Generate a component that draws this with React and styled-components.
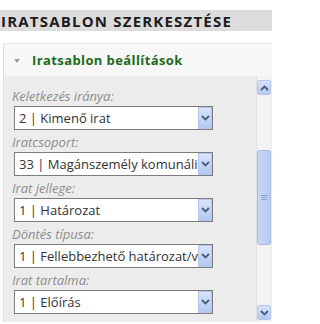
import React from "react";
import styled, { createGlobalStyle } from "styled-components";

const GlobalStyle = createGlobalStyle`
  html, body {
    margin: 0;
    padding: 0;
    background: #fff;
    overflow: hidden;
  }
  body {
    width: 272px;
    height: 324px;
    font-family: "Open Sans", "Liberation Sans", sans-serif;
  }
`;

const Page = styled.div`
  padding-top: 10px;
`;

const TitleBar = styled.h1`
  margin: 0;
  height: 21px;
  line-height: 22px;
  padding-left: 1px;
  background: #dcdcdc;
  color: #1c1c1c;
  font-size: 15px;
  font-weight: 700;
  letter-spacing: 1.2px;
  white-space: nowrap;
  overflow: hidden;
`;

const Panel = styled.section`
  margin: 12px 0 0 3px;
  border-left: 1px solid #dedede;
  border-top: 1px solid #e6e6e6;
`;

const PanelHeader = styled.div`
  height: 32px;
  display: flex;
  align-items: center;
  gap: 12px;
  padding-left: 10px;
  background: #f7f7f7;
  color: #1d6a1d;
  font-size: 13px;
  font-weight: 700;
  letter-spacing: 0.4px;
`;

const Caret = styled.span`
  width: 0;
  height: 0;
  margin-top: 2px;
  border-left: 3.5px solid transparent;
  border-right: 3.5px solid transparent;
  border-top: 4px solid #9a9a9a;
`;

const PanelBody = styled.div`
  height: 246px;
  display: flex;
  background: #ececec;
  overflow: hidden;
`;

const Form = styled.div`
  flex: 1;
  padding: 10px 0 0 8px;
`;

const Field = styled.div`
  margin-bottom: 2px;
`;

const Label = styled.div`
  height: 20px;
  line-height: 20px;
  color: #8c8c8c;
  font-size: 13px;
  font-style: italic;
`;

const SelectBox = styled.div`
  width: 199px;
  height: 24px;
  margin-left: 2px;
  box-sizing: border-box;
  display: flex;
  border: 1px solid #7c7c7c;
  background: #fff;
`;

const SelectText = styled.span`
  flex: 1;
  min-width: 0;
  overflow: hidden;
  white-space: nowrap;
  text-overflow: clip;
  padding-left: 4px;
  color: #333;
  font-size: 13px;
  line-height: 22px;
`;

const BlueButton = styled.span`
  width: ${(p) => p.$w || 14}px;
  height: ${(p) => p.$h || 22}px;
  box-sizing: border-box;
  flex-shrink: 0;
  display: flex;
  align-items: center;
  justify-content: center;
  background: linear-gradient(#d9e4fb, #b3c7f1);
  border: 1px solid #b4c6ec;
  border-radius: ${(p) => (p.$round ? 2 : 0)}px;
`;

const Scrollbar = styled.div`
  width: 14px;
  margin-right: 1px;
  padding: 4px 0 2px;
  display: flex;
  flex-direction: column;
  background: #f3f3f3;
  border-left: 1px solid #e2e2e2;
`;

const Thumb = styled.div`
  height: 95px;
  margin-top: 55px;
  box-sizing: border-box;
  display: flex;
  align-items: center;
  justify-content: center;
  background: linear-gradient(90deg, #c9d7f6, #b8caf2);
  border: 1px solid #a9bde8;
  border-radius: 2px;
`;

const Grip = styled.div`
  width: 6px;
  height: 5px;
  background: repeating-linear-gradient(#8fa5d4 0 1px, transparent 1px 2px);
`;

const Spacer = styled.div`
  flex: 1;
`;

const Chevron = ({ up }) => (
  <svg width="9" height="6" viewBox="0 0 9 6">
    <path
      d={up ? "M1 5 L4.5 1.5 L8 5" : "M1 1 L4.5 4.5 L8 1"}
      fill="none"
      stroke="#4a5d85"
      strokeWidth="1.8"
    />
  </svg>
);

const fields = [
  { label: "Keletkezés iránya:", value: "2 | Kimenő irat" },
  { label: "Iratcsoport:", value: "33 | Magánszemély komunális adó" },
  { label: "Irat jellege:", value: "1 | Határozat" },
  { label: "Döntés típusa:", value: "1 | Fellebbezhető határozat/végzés" },
  { label: "Irat tartalma:", value: "1 | Előírás" },
];

const App = () => (
  <Page>
    <GlobalStyle />
    <TitleBar>IRATSABLON SZERKESZTÉSE</TitleBar>
    <Panel>
      <PanelHeader>
        <Caret />
        Iratsablon beállítások
      </PanelHeader>
      <PanelBody>
        <Form>
          {fields.map((f) => (
            <Field key={f.label}>
              <Label>{f.label}</Label>
              <SelectBox>
                <SelectText>{f.value}</SelectText>
                <BlueButton>
                  <Chevron />
                </BlueButton>
              </SelectBox>
            </Field>
          ))}
        </Form>
        <Scrollbar>
          <BlueButton $w={14} $h={15} $round>
            <Chevron up />
          </BlueButton>
          <Thumb>
            <Grip />
          </Thumb>
          <Spacer />
          <BlueButton $w={14} $h={15} $round>
            <Chevron />
          </BlueButton>
        </Scrollbar>
      </PanelBody>
    </Panel>
  </Page>
);

export default App;
